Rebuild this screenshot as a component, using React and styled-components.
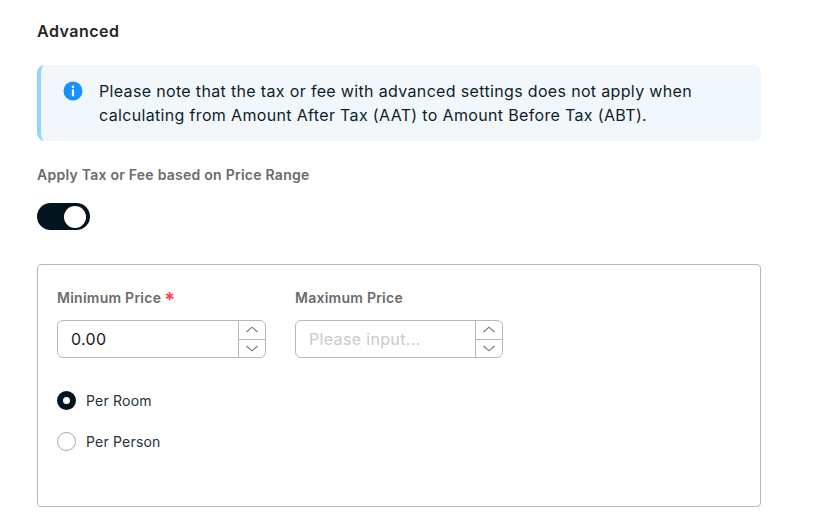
import React from 'react';
import styled, { createGlobalStyle } from 'styled-components';

const GlobalStyle = createGlobalStyle`
  html, body {
    margin: 0;
    padding: 0;
    background: #fff;
    font-family: Inter, "Liberation Sans", sans-serif;
  }
`;

const Page = styled.div`
  width: 724px;
  height: 521px;
  overflow: hidden;
  padding: 21px 0 0 37px;
`;

const Title = styled.h2`
  margin: 0;
  font-size: 16px;
  line-height: 20px;
  font-weight: 600;
  letter-spacing: 0.5px;
  color: #262626;
`;

const Alert = styled.div`
  box-sizing: border-box;
  display: flex;
  gap: 16px;
  height: 76px;
  margin-top: 24px;
  padding: 14px 24px 0 22px;
  background: #f2f7fc;
  border-left: 4px solid #91d5ff;
  border-radius: 8px;
  font-size: 16px;
  line-height: 24px;
  letter-spacing: 0.34px;
  color: #0f1d2b;
`;

const InfoIcon = styled.svg`
  flex: none;
  width: 20px;
  height: 20px;
  margin-top: 2px;
`;

const FieldLabel = styled.div`
  font-size: 14px;
  line-height: 20px;
  font-weight: 600;
  letter-spacing: 0.25px;
  color: #6b6b6b;
`;

const SwitchLabel = styled(FieldLabel)`
  margin-top: 24px;
`;

const Switch = styled.div`
  box-sizing: border-box;
  display: flex;
  justify-content: flex-end;
  align-items: center;
  width: 53px;
  height: 27px;
  margin-top: 18px;
  padding-right: 4px;
  background: #04141f;
  border-radius: 14px;
`;

const Knob = styled.span`
  width: 22px;
  height: 22px;
  background: #fff;
  border-radius: 50%;
`;

const Panel = styled.div`
  box-sizing: border-box;
  height: 243px;
  margin-top: 34px;
  padding: 23px 19px;
  border: 1px solid #b5b7b9;
  border-radius: 4px;
`;

const FieldRow = styled.div`
  display: flex;
  gap: 29px;
`;

const Field = styled.div`
  width: ${p => p.$width}px;
`;

const LabelRow = styled.div`
  display: flex;
  gap: 3px;
`;

const Required = styled.span`
  font-size: 20px;
  line-height: 24px;
  height: 20px;
  font-weight: 600;
  color: #ff3b4a;
`;

const NumberBox = styled.div`
  box-sizing: border-box;
  display: flex;
  height: 38px;
  margin-top: 12px;
  border: 1px solid #b5b7b9;
  border-radius: 6px;
  overflow: hidden;
`;

const ValueText = styled.div`
  flex: 1;
  padding-left: 13px;
  font-size: 16px;
  line-height: 36px;
  letter-spacing: 0.34px;
  color: ${p => (p.$placeholder ? '#c9cacc' : '#1a1a1a')};
`;

const Stepper = styled.div`
  display: flex;
  flex-direction: column;
  flex: none;
  width: 26px;
  border-left: 1px solid #b5b7b9;
`;

const StepButton = styled.div`
  flex: 1;
  display: flex;
  align-items: center;
  justify-content: center;
  & + & {
    border-top: 1px solid #b5b7b9;
  }
`;

const Chevron = styled.svg`
  width: 12px;
  height: 7px;
  fill: none;
  stroke: #6f7780;
  stroke-width: 1.1;
`;

const RadioGroup = styled.div`
  display: flex;
  flex-direction: column;
  gap: 21px;
  margin-top: 32px;
`;

const RadioRow = styled.div`
  display: flex;
  align-items: center;
  gap: 10px;
  height: 20px;
  font-size: 14px;
  letter-spacing: 0.2px;
  color: #26323c;
`;

const RadioDot = styled.span`
  box-sizing: border-box;
  width: 19px;
  height: 19px;
  border-radius: 50%;
  border: ${p => (p.$checked ? '6px solid #04141f' : '1px solid #a3a6a9')};
  background: #fff;
`;

function NumberInput({ value, placeholder }) {
  return (
    <NumberBox>
      <ValueText $placeholder={!value}>{value || placeholder}</ValueText>
      <Stepper>
        <StepButton>
          <Chevron viewBox="0 0 12 7"><path d="M.5 6 6 1.2 11.5 6" /></Chevron>
        </StepButton>
        <StepButton>
          <Chevron viewBox="0 0 12 7"><path d="M.5 1 6 5.8 11.5 1" /></Chevron>
        </StepButton>
      </Stepper>
    </NumberBox>
  );
}

export default function App() {
  return (
    <Page>
      <GlobalStyle />
      <Title>Advanced</Title>
      <Alert>
        <InfoIcon viewBox="0 0 20 20">
          <circle cx="10" cy="10" r="9.5" fill="#1890ff" />
          <circle cx="10" cy="5.8" r="1.3" fill="#fff" />
          <rect x="8.9" y="8.3" width="2.2" height="7" rx="0.6" fill="#fff" />
        </InfoIcon>
        <div>
          Please note that the tax or fee with advanced settings does not apply when
          <br />
          calculating from Amount After Tax (AAT) to Amount Before Tax (ABT).
        </div>
      </Alert>
      <SwitchLabel>Apply Tax or Fee based on Price Range</SwitchLabel>
      <Switch><Knob /></Switch>
      <Panel>
        <FieldRow>
          <Field $width={209}>
            <LabelRow>
              <FieldLabel>Minimum Price</FieldLabel>
              <Required>*</Required>
            </LabelRow>
            <NumberInput value="0.00" />
          </Field>
          <Field $width={208}>
            <FieldLabel>Maximum Price</FieldLabel>
            <NumberInput placeholder="Please input..." />
          </Field>
        </FieldRow>
        <RadioGroup>
          <RadioRow><RadioDot $checked />Per Room</RadioRow>
          <RadioRow><RadioDot />Per Person</RadioRow>
        </RadioGroup>
      </Panel>
    </Page>
  );
}
